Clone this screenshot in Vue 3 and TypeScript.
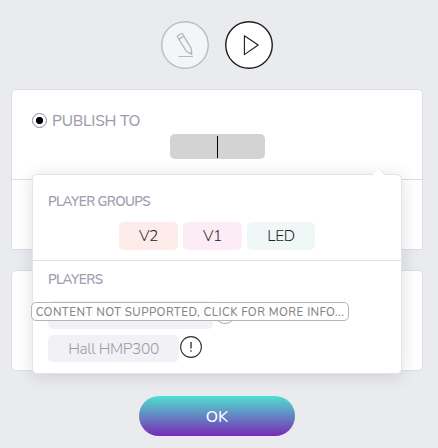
<script setup lang="ts">
interface Group {
  name: string
  tone: string
}

const groups: Group[] = [
  { name: 'V2', tone: 'coral' },
  { name: 'V1', tone: 'pink' },
  { name: 'LED', tone: 'mint' },
]
</script>

<template>
  <main class="dialog">
    <nav class="steps">
      <button class="step muted" aria-label="Edit">
        <svg viewBox="0 0 48 48" width="48" height="48" fill="none" stroke="#b7b8bb" stroke-width="1.3" stroke-linejoin="round">
          <path d="M16.6 14.8 L20.4 12.5 Q21.1 12.2 21.5 12.8 L30.3 27.7 L30.8 33.4 L25.6 30.6 L16.4 15.8 Q16.1 15.2 16.6 14.8 Z" />
          <path d="M17.8 18.1 L23 15.1 M29 32.3 L30.6 31.4" />
          <path d="M17.5 35.5 H32" stroke-width="1" />
        </svg>
      </button>
      <button class="step" aria-label="Play">
        <svg viewBox="0 0 48 48" width="48" height="48" fill="none" stroke="#1d1d1d" stroke-width="1.1" stroke-linejoin="round">
          <path d="M19.4 14.8 V33.6 L33.2 24 Z" />
        </svg>
      </button>
    </nav>

    <section class="card publish">
      <div class="target">
        <label class="choice">
          <span class="radio"></span>
          <span class="choice-text">PUBLISH TO</span>
        </label>
        <div class="field"><span class="caret"></span></div>
      </div>
    </section>
    <section class="card schedule"></section>

    <button class="ok"><span>OK</span></button>

    <div class="popover">
      <svg class="arrow" viewBox="0 0 14 8" width="14" height="8">
        <path d="M0 8 L7 1 L14 8 Z" fill="#fff" />
        <path d="M7 1 L13 7" fill="none" stroke="#e4e5ee" stroke-width="0.8" />
      </svg>
      <section class="groups">
        <h2>PLAYER GROUPS</h2>
        <div class="tags">
          <span v-for="group in groups" :key="group.name" class="tag" :class="group.tone">{{ group.name }}</span>
        </div>
      </section>
      <section class="players">
        <h2>PLAYERS</h2>
        <div class="player">
          <span class="tag device wide"></span>
          <span class="alert soft"></span>
        </div>
        <div class="player">
          <span class="tag device">Hall HMP300</span>
          <span class="alert">
            <svg viewBox="0 0 22 22" width="22" height="22">
              <circle cx="11" cy="11" r="10.4" fill="#fff" stroke="#333" stroke-width="1.1" />
              <path d="M11 6 V12.6 M11 14.2 V15.8" stroke="#444" stroke-width="1.5" />
            </svg>
          </span>
        </div>
      </section>
      <div class="tooltip"><span>CONTENT NOT SUPPORTED, CLICK FOR MORE INFO...</span></div>
    </div>
  </main>
</template>

<style>
body {
  background: #eaebef;
}
</style>

<style scoped>
* {
  box-sizing: border-box;
}

.dialog {
  position: relative;
  width: 438px;
  height: 448px;
  padding: 21px 15px 0 11px;
  overflow: hidden;
  background: #eaebef;
  font-family: Nunito, "Noto Sans", "Open Sans", sans-serif;
}

button {
  margin: 0;
  padding: 0;
  font-family: inherit;
}

.steps {
  display: flex;
  justify-content: center;
  gap: 16px;
  height: 68px;
}

.step {
  width: 48px;
  height: 48px;
  border: 0;
  border-radius: 50%;
  background: #fff;
  box-shadow: inset 0 0 0 1.4px #1d1d1d;
}

.step svg {
  display: block;
}

.step.muted {
  background: #f4f5f8;
  box-shadow: inset 0 0 0 1.4px #bbbcbe;
}

.card {
  border: 1px solid #dcdde7;
  background: #fff;
}

.publish {
  height: 161px;
  border-radius: 5px 5px 0 0;
}

.target {
  height: 90px;
  padding: 20px 20px 0;
  border-bottom: 1px solid #dcdde3;
}

.choice {
  display: flex;
  align-items: center;
  gap: 5px;
  height: 21px;
}

.radio {
  width: 15px;
  height: 15px;
  border: 1px solid #8d8a98;
  border-radius: 50%;
  background: radial-gradient(circle, #000 3.3px, transparent 3.9px);
}

.choice-text {
  color: #9f9dab;
  font-size: 15.5px;
  font-weight: 500;
  letter-spacing: -0.22px;
  line-height: 21px;
  white-space: nowrap;
}

.field {
  display: flex;
  justify-content: center;
  width: 95px;
  height: 25px;
  margin: 3px auto 0;
  padding-top: 2px;
  border-radius: 5px;
  background: #d3d3d3;
}

.caret {
  width: 1px;
  height: 22px;
  background: #000;
}

.schedule {
  height: 101px;
  margin-top: 20px;
  border-radius: 5px;
}

.ok {
  display: block;
  width: 156px;
  height: 40px;
  margin: 25px auto 0;
  padding-top: 1px;
  border: 0;
  border-radius: 20px;
  background: linear-gradient(#50dfd0, #792bb5);
  color: #fff;
  font-size: 16px;
  font-weight: 500;
  line-height: 40px;
}

.popover {
  position: absolute;
  top: 174px;
  left: 32px;
  width: 370px;
  height: 200px;
  border: 1px solid #e2e3ee;
  border-radius: 5px;
  background: #fff;
  box-shadow: 0 2px 18px rgba(0, 0, 0, 0.13);
}

.arrow {
  position: absolute;
  top: -7px;
  right: 15px;
}

.groups {
  height: 86px;
  padding: 17px 15px 0;
  border-bottom: 1px solid #dfe0eb;
}

h2 {
  height: 20px;
  margin: 0;
  color: #a19fae;
  font-size: 13.5px;
  font-weight: 600;
  letter-spacing: -0.65px;
  line-height: 20px;
  white-space: nowrap;
}

.tags {
  display: flex;
  justify-content: center;
  gap: 5px;
  margin-top: 10px;
}

.tag {
  display: flex;
  align-items: center;
  justify-content: center;
  width: 59px;
  height: 28px;
  padding-bottom: 1px;
  border-radius: 5px;
  color: #252525;
  font-size: 15.5px;
  font-weight: 300;
  letter-spacing: -0.4px;
}

.coral {
  background: #fcebe9;
}

.pink {
  background: #fcecf5;
}

.mint {
  width: 68px;
  background: #eff8f7;
}

.players {
  padding: 9px 15px 0;
}

.players h2 {
  margin-bottom: 11px;
}

.player {
  display: flex;
  gap: 1px;
  height: 34px;
}

.device {
  width: 131px;
  height: 27px;
  padding-bottom: 0;
  background: #f1f1f6;
  color: #9b9b9e;
}

.wide {
  width: 165px;
  height: 28px;
}

.alert {
  width: 22px;
  height: 22px;
  margin-top: 1px;
  border-radius: 50%;
}

.alert svg {
  display: block;
}

.alert.soft {
  border: 1px solid #aaa;
}

.tooltip {
  position: absolute;
  top: 127px;
  left: -2px;
  width: 318px;
  height: 19px;
  border: 1px solid #b5b5b5;
  border-radius: 5px;
  background: #fff;
  color: #858585;
  font-size: 11.5px;
  font-weight: 500;
  letter-spacing: 0.43px;
  line-height: 19px;
  text-align: center;
  white-space: nowrap;
}
</style>
